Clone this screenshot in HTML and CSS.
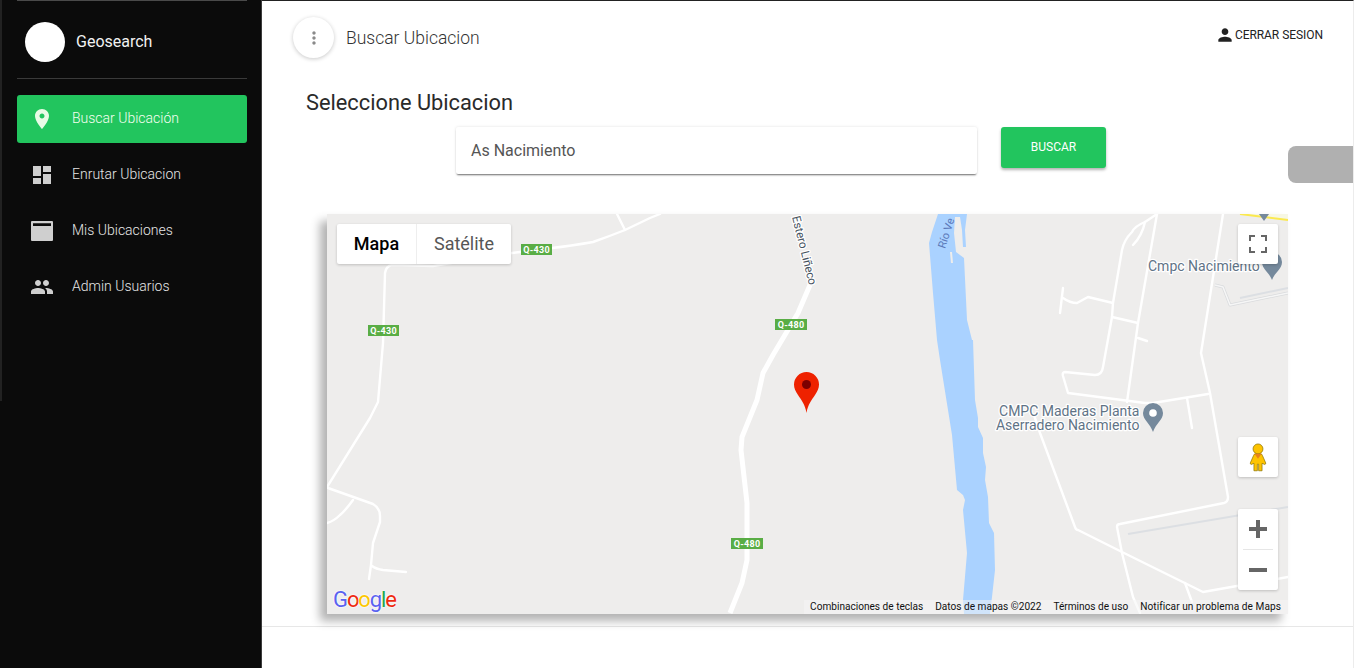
FILE: index.html
```html
<!DOCTYPE html>
<html lang="es">
<head>
<meta charset="utf-8">
<title>Geosearch</title>
<link rel="stylesheet" href="styles.css">
</head>
<body>
<div class="app">
  <aside class="sidebar">
    <div class="sidebar-edge"></div>
    <div class="brand">
      <div class="avatar"></div>
      <span class="brand-name">Geosearch</span>
    </div>
    <nav class="nav">
      <a class="nav-item active">
        <svg class="nav-icon" viewBox="0 0 24 24"><path d="M12 2C8.13 2 5 5.13 5 9c0 5.25 7 13 7 13s7-7.75 7-13c0-3.87-3.13-7-7-7zm0 9.5c-1.38 0-2.5-1.12-2.5-2.5s1.12-2.5 2.5-2.5 2.5 1.12 2.5 2.5-1.12 2.5-2.5 2.5z"/></svg>
        <span class="nav-label">Buscar Ubicación</span>
      </a>
      <a class="nav-item">
        <svg class="nav-icon" viewBox="0 0 24 24"><path d="M3 13h8V3H3v10zm0 8h8v-6H3v6zm10 0h8V11h-8v10zm0-18v6h8V3h-8z"/></svg>
        <span class="nav-label">Enrutar Ubicacion</span>
      </a>
      <a class="nav-item">
        <svg class="nav-icon" viewBox="0 0 24 24"><path fill-rule="evenodd" d="M2 2h20a1 1 0 0 1 1 1v18a1 1 0 0 1-1 1H2a1 1 0 0 1-1-1V3a1 1 0 0 1 1-1zm1 2.300v2.700h18V4.300z"/></svg>
        <span class="nav-label">Mis Ubicaciones</span>
      </a>
      <a class="nav-item">
        <svg class="nav-icon" viewBox="0 0 24 24"><path d="M16 11c1.660 0 2.990-1.340 2.990-3S17.660 5 16 5c-1.660 0-3 1.340-3 3s1.340 3 3 3zm-8 0c1.660 0 2.990-1.340 2.990-3S9.660 5 8 5C6.340 5 5 6.340 5 8s1.340 3 3 3zm0 2c-2.330 0-7 1.170-7 3.500V19h14v-2.500c0-2.330-4.670-3.500-7-3.500zm8 0c-.29 0-.62.020-.97.050 1.160.84 1.970 1.970 1.970 3.450V19h6v-2.500c0-2.330-4.670-3.500-7-3.500z"/></svg>
        <span class="nav-label">Admin Usuarios</span>
      </a>
    </nav>
  </aside>

  <main class="main">
    <header class="topbar">
      <button class="round-btn" type="button">
        <svg class="more-icon" viewBox="0 0 24 24"><path d="M12 8c1.100 0 2-.9 2-2s-.9-2-2-2-2 .9-2 2 .9 2 2 2zm0 2c-1.100 0-2 .9-2 2s.9 2 2 2 2-.9 2-2-.9-2-2-2zm0 6c-1.100 0-2 .9-2 2s.9 2 2 2 2-.9 2-2-.9-2-2-2z"/></svg>
      </button>
      <span class="page-title">Buscar Ubicacion</span>
      <a class="logout">
        <svg class="person-icon" viewBox="0 0 24 24"><path d="M12 12c2.210 0 4-1.790 4-4s-1.790-4-4-4-4 1.790-4 4 1.790 4 4 4zm0 2c-2.670 0-8 1.340-8 4v2h16v-2c0-2.660-5.330-4-8-4z"/></svg>
        <span>CERRAR SESION</span>
      </a>
    </header>

    <h2 class="section-title">Seleccione Ubicacion</h2>

    <div class="search-row">
      <div class="search-input">As Nacimiento</div>
      <button class="search-btn" type="button">BUSCAR</button>
    </div>

    <div class="side-tab"></div>

    <section class="map">
      <svg class="map-canvas" viewBox="327 214 961 400">
        <rect x="327" y="214" width="961" height="400" fill="#eeedec"/>
        <path class="water" d="M938 214L932 232L929 243L933 293L937 340L940 360L952 435L957 490L963 495L965 500L963 510L967 553L963 600L964 614L990 614L992 597L995 570L994 533L989 523L988 497L985 480L986 467L983 453L983 438L978 427L978 418L975 400L973 340L972 340L967 320L964 258L956 252L954 233L955 217L960 217L962 230L963 247L966 247L965 230L967 214Z"/>
        <path class="island" d="M950 252L952 252L953 263L951 263Z"/>

        <path class="poly-yellow" d="M1240 214L1288 214L1288 220Z"/>
        <path class="yellow" d="M1240 214L1288 220"/>

        <path class="outline" d="M1215 285L1223 287L1230 305L1288 293"/>
        <path class="outline-in" d="M1215 285L1223 287L1230 305L1288 293"/>
        <path class="rail" d="M1240 298L1288 288"/>
        <path class="rail" d="M1128 534L1288 507"/>

        <path class="road" d="M660 214L650 218L625 230Q610 236 593 242Q570 246 552 248L512 253L433 266L392 265Q386 266 385 273L383 343L378 402L370 418L327 487"/>
        <path class="road" d="M617 214L625 230"/>
        <path class="road" d="M328 488L373 504Q380 508 380 516L380 522L373 543L371 565L369 579"/>
        <path class="road" d="M372 566Q376 569 383 570L406 572"/>
        <path class="road" d="M353 500Q345 511 340 515Q334 521 327 523"/>

        <path class="road-major" d="M810 285L798 313L773 355L763 373L757 400L742 437L741 450L747 503L747 560L742 583L730 613"/>

        <path class="road" d="M1157 214L1145 222Q1135 226 1132 232Q1124 240 1122 250L1113 303L1112 317L1103 367Q1102 375 1095 375L1065 372Q1062 372 1063 376L1068 393L1145 403L1153 403L1208 394"/>
        <path class="road" d="M1145 222Q1142 236 1133 245"/>
        <path class="road" d="M1157 214L1138 323L1127 402"/>
        <path class="road" d="M1034 415L1040 433L1075 527Q1076 530 1078 530L1122 552L1203 592L1288 577"/>
        <path class="road" d="M1223 214L1201 353L1210 393L1228 497Q1228 502 1224 503L1120 524Q1117 524 1117 527L1122 553L1133 597L1140 613"/>
        <path class="road" d="M1185 583L1192 602"/>
        <path class="road" d="M1063 288L1060 313"/>
        <path class="road" d="M1063 298Q1070 303 1077 303L1088 297L1113 303"/>
        <path class="road" d="M1112 317L1138 323"/>
        <path class="road" d="M1138 338L1147 341"/>
        <path class="road" d="M1187 398L1192 428"/>

        <text class="road-name" transform="translate(792 217) rotate(76)">Estero Liñeco</text>
        <text class="river-name" transform="translate(945 249) rotate(-72)">Río Ve</text>

        <g class="shield"><rect x="521" y="244" width="31" height="11"/><text x="536.500" y="252.700">Q-430</text></g>
        <g class="shield"><rect x="368" y="325" width="31" height="11"/><text x="383.500" y="333.700">Q-430</text></g>
        <g class="shield"><rect x="775" y="319" width="32" height="11"/><text x="791" y="327.700">Q-480</text></g>
        <g class="shield"><rect x="731" y="538" width="32" height="11"/><text x="747" y="546.700">Q-480</text></g>

        <path class="poi" d="M1264 221L1259 214H1269Z"/>
        <path class="poi" d="M1272 252a10 10 0 0 1 10 10c0 7-7 10-10 18c-3-8-10-11-10-18a10 10 0 0 1 10-10z"/>
        <text class="poi-label" x="1148" y="271">Cmpc Nacimiento</text>

        <path class="poi" d="M1153 403a10 10 0 0 1 10 10c0 7-7 10-10 19c-3-9-10-12-10-19a10 10 0 0 1 10-10z"/>
        <circle class="poi-dot" cx="1153" cy="413" r="3.800"/>
        <text class="poi-label end" x="1139.500" y="416">CMPC Maderas Planta</text>
        <text class="poi-label end" x="1139.500" y="430">Aserradero Nacimiento</text>

        <path class="marker" d="M806.500 372a12.500 12.500 0 0 1 12.500 12.500c0 4-1.500 6.500-4 10.500c-3.500 5.500-7 9-8.500 18c-1.500-9-5-12.500-8.500-18c-2.500-4-4-6.500-4-10.500a12.500 12.500 0 0 1 12.500-12.500z"/>
        <circle class="marker-dot" cx="806.500" cy="384.500" r="4.500"/>
      </svg>

      <div class="map-type">
        <div class="map-type-btn selected">Mapa</div>
        <div class="map-type-btn">Satélite</div>
      </div>

      <button class="map-ctl fullscreen" type="button">
        <svg class="ctl-icon" viewBox="0 0 18 18"><path d="M0 6V0h6v2H2v4zM12 0h6v6h-2V2h-4zM18 12v6h-6v-2h4v-4zM6 18H0v-6h2v4h4z"/></svg>
      </button>

      <button class="map-ctl pegman" type="button">
        <svg class="pegman-icon" viewBox="0 0 20 32">
          <path class="peg-body" d="M7 12.500H13Q14.500 12.500 15 14.500L18.500 22.500Q19 24 17.500 24.300L14.500 23V31.300H10.700V24H9.300V31.300H5.500V23L2.500 24.300Q1 24 1.500 22.500L5 14.500Q5.500 12.500 7 12.500Z"/>
          <circle class="peg-body" cx="10" cy="7" r="5.500"/>
          <path class="peg-collar" d="M6 12.500h8L10 18z"/>
        </svg>
      </button>

      <div class="zoom-ctl">
        <button class="zoom-btn" type="button"><svg class="ctl-icon" viewBox="0 0 18 18"><path d="M7 0h4v7h7v4h-7v7H7v-7H0V7h7z"/></svg></button>
        <div class="zoom-sep"></div>
        <button class="zoom-btn" type="button"><svg class="ctl-icon" viewBox="0 0 18 18"><path d="M0 7h18v4H0z"/></svg></button>
      </div>

      <div class="google-logo"><span class="g-blue">G</span><span class="g-red">o</span><span class="g-yellow">o</span><span class="g-blue">g</span><span class="g-green">l</span><span class="g-red">e</span></div>

      <div class="attribution">
        <span>Combinaciones de teclas</span>
        <span>Datos de mapas ©2022</span>
        <span>Términos de uso</span>
        <span class="attr-wide">Notificar un problema de Maps</span>
      </div>
    </section>

    <footer class="footer"></footer>
  </main>
</div>
</body>
</html>
```

FILE: styles.css
```css
* { box-sizing: border-box; }
html, body { margin: 0; height: 100%; overflow: hidden; }
body { font-family: Roboto, "Liberation Sans", sans-serif; background: #fff; color: #222; }

.app { display: flex; height: 668px; }

/* Sidebar */
.sidebar {
  position: relative;
  flex: 0 0 262px;
  background: #0b0b0b;
  border-right: 1px solid #3c3c3c;
  padding: 1px 14px 0 17px;
}
.sidebar::before {
  content: "";
  position: absolute;
  top: 0;
  left: 17px;
  width: 230px;
  height: 1px;
  background: #4a4a4a;
}
.sidebar-edge {
  position: absolute;
  left: 0;
  top: 0;
  width: 2px;
  height: 401px;
  background: #222;
}
.brand {
  display: flex;
  align-items: center;
  gap: 11px;
  height: 78px;
  padding: 4px 0 0 8px;
  border-bottom: 1px solid #3a3a3a;
}
.avatar { width: 40px; height: 40px; border-radius: 50%; background: #fff; }
.brand-name { font-size: 16px; color: #f2f2f2; }
.nav { display: flex; flex-direction: column; gap: 8px; margin-top: 16px; }
.nav-item {
  display: flex;
  align-items: center;
  gap: 18px;
  height: 48px;
  padding-left: 13px;
  border-radius: 3px;
  font-size: 14px;
  font-weight: 300;
  color: #e6e6e6;
}
.nav-label { padding-bottom: 2px; }
.nav-item.active { background: #22c55e; color: #f4fff0; }
.nav-icon { width: 24px; height: 24px; fill: #cfcfcf; flex: none; }
.nav-item.active .nav-icon { fill: #e8fbe6; }

/* Main */
.main { position: relative; flex: 1; min-width: 0; border-top: 1px solid #222; border-right: 1px solid #ececec; }
.topbar { display: flex; align-items: center; height: 57px; padding: 16px 30px 0 31px; }
.round-btn {
  display: flex;
  align-items: center;
  justify-content: center;
  width: 41px;
  height: 41px;
  padding: 0;
  border: 0;
  border-radius: 50%;
  background: #fff;
  box-shadow: 0 1px 4px rgba(0, 0, 0, .22);
}
.more-icon { width: 20px; height: 20px; fill: #8a8a8a; }
.page-title { margin-left: 12px; font-size: 17.500px; font-weight: 300; color: #333; }
.logout {
  display: flex;
  align-items: center;
  margin: -5px 0 0 auto;
  font-size: 12px;
  letter-spacing: -.05px;
  color: #222;
}
.person-icon { width: 20px; height: 20px; fill: #222; }

.section-title { margin: 32px 0 0 44px; font-size: 21.800px; line-height: 26px; font-weight: 400; color: #2a2a2a; }

.search-row { display: flex; align-items: flex-start; gap: 24px; margin: 11px 0 0 194px; }
.search-input {
  display: flex;
  align-items: center;
  width: 521px;
  height: 47px;
  padding-left: 15px;
  border-radius: 2px;
  background: #fff;
  font-size: 16px;
  color: #555;
  box-shadow: 0 2px 2px -1px rgba(0, 0, 0, .55), 0 0 3px rgba(0, 0, 0, .12);
}
.search-btn {
  width: 105px;
  height: 41px;
  padding: 0 0 1px;
  border: 0;
  border-radius: 3px;
  background: #22c55e;
  color: #fff;
  font-family: inherit;
  font-size: 12px;
  box-shadow: 0 2px 3px rgba(0, 0, 0, .3);
}
.side-tab {
  position: absolute;
  top: 145px;
  right: 0;
  width: 65px;
  height: 37px;
  border-radius: 8px 0 0 8px;
  background: #b0b0b0;
}

/* Map */
.map {
  position: relative;
  width: 961px;
  height: 400px;
  margin: 40px 0 0 65px;
  background: #eeedec;
  box-shadow: -7px 7px 9px rgba(0, 0, 0, .3);
}
.map-canvas { display: block; width: 961px; height: 400px; font-family: Roboto, sans-serif; }
.water { fill: #aad2ff; }
.island { fill: #eeedec; }
.poly-yellow { fill: #f7f7e4; }
.yellow { fill: none; stroke: #fbe94f; stroke-width: 2; }
.road { fill: none; stroke: #fff; stroke-width: 2.400; stroke-linecap: round; stroke-linejoin: round; }
.road-major { fill: none; stroke: #fff; stroke-width: 5; stroke-linejoin: round; }
.outline { fill: none; stroke: #d9dbdd; stroke-width: 3; stroke-linejoin: round; }
.outline-in { fill: none; stroke: #f6f6f6; stroke-width: 1.500; stroke-linejoin: round; }
.rail { fill: none; stroke: #dcdfe3; stroke-width: 2; }
.road-name { font-size: 11.700px; fill: #46525e; paint-order: stroke; stroke: #fff; stroke-width: 2.500px; stroke-linejoin: round; }
.river-name { font-size: 11px; fill: #5a78b8; }
.shield rect { fill: #59ad45; }
.shield text { font-size: 9px; font-weight: 700; fill: #fff; text-anchor: middle; letter-spacing: .3px; }
.poi { fill: #75899c; }
.poi-dot { fill: #fff; }
.poi-label { font-size: 14px; fill: #5f7386; paint-order: stroke; stroke: #fff; stroke-width: 2.500px; stroke-linejoin: round; }
.poi-label.end { text-anchor: end; }
.marker { fill: #ee2200; }
.marker-dot { fill: #7c0000; }

.map-type {
  position: absolute;
  top: 10px;
  left: 10px;
  display: flex;
  width: 174px;
  height: 40px;
  border-radius: 2px;
  background: #fff;
  box-shadow: 0 1px 3px rgba(0, 0, 0, .2);
}
.map-type-btn { display: flex; align-items: center; justify-content: center; flex: 1 1 94px; padding-bottom: 2px; font-size: 18px; color: #565656; }
.map-type-btn.selected { flex: 0 0 80px; font-weight: 500; color: #000; border-right: 1px solid #eee; }

.map-ctl, .zoom-ctl {
  position: absolute;
  left: 911px;
  width: 40px;
  padding: 0;
  border: 0;
  border-radius: 2px;
  background: #fff;
  box-shadow: 0 1px 3px rgba(0, 0, 0, .2);
}
.map-ctl { display: flex; align-items: center; justify-content: center; height: 40px; }
.fullscreen { top: 10px; }
.pegman { top: 223px; }
.zoom-ctl { top: 295px; height: 81px; }
.zoom-btn { display: flex; align-items: center; justify-content: center; width: 40px; height: 40px; padding: 0; border: 0; background: none; }
.zoom-sep { height: 1px; margin: 0 5px; background: #e6e6e6; }
.ctl-icon { width: 18px; height: 18px; fill: #666; }
.pegman-icon { width: 18px; height: 30px; }
.peg-body { fill: #fdc300; stroke: #8c7200; stroke-width: .8; }
.peg-collar { fill: #e8811a; }

.google-logo {
  position: absolute;
  left: 6px;
  bottom: 1px;
  font-family: Roboto, sans-serif;
  font-size: 22px;
  line-height: 26px;
  font-weight: 400;
  letter-spacing: -1.100px;
  text-shadow: 0 0 2px #fff, 0 0 2px #fff;
}
.g-blue { color: #5a62f0; }
.g-red { color: #ee2a10; }
.g-yellow { color: #fcc700; }
.g-green { color: #1ea84c; }

.attribution {
  position: absolute;
  right: 0;
  bottom: 0;
  display: flex;
  height: 14px;
  padding-right: 1px;
  font-size: 10.100px;
  line-height: 14px;
  color: #111;
  background: rgba(245, 245, 245, .5);
}
.attribution span { padding: 0 6px; white-space: nowrap; }
.attribution .attr-wide { letter-spacing: .07px; }

.footer { height: 42px; margin-top: 12px; border-top: 1px solid #e7e7e7; }
```
